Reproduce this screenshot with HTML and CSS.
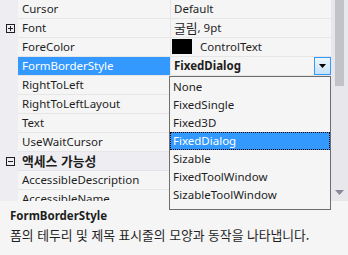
FILE: index.html
```html
<!DOCTYPE html>
<html lang="ko">
<head>
    <meta charset="UTF-8">
    <title>속성</title>
    <link rel="stylesheet" href="styles.css">
</head>
<body>
<div class="panel">
    <div class="grid">
        <div class="rows">
            <div class="row">
                <div class="gutter"></div>
                <div class="name">Cursor</div>
                <div class="value">Default</div>
            </div>
            <div class="row">
                <div class="gutter">
                    <svg class="toggle" width="9" height="9" viewBox="0 0 9 9"><rect x="0.5" y="0.5" width="8" height="8" fill="none" stroke="#1e1e1e"/><path d="M2 4.5h5M4.5 2v5" stroke="#1e1e1e"/></svg>
                </div>
                <div class="name">Font</div>
                <div class="value"><span class="ko">굴림</span>, 9pt</div>
            </div>
            <div class="row">
                <div class="gutter"></div>
                <div class="name">ForeColor</div>
                <div class="value"><span class="swatch"></span>ControlText</div>
            </div>
            <div class="row selected">
                <div class="gutter"></div>
                <div class="name">FormBorderStyle</div>
                <div class="value">
                    <b>FixedDialog</b>
                    <span class="drop-btn"><svg width="7" height="4" viewBox="0 0 7 4"><path d="M0 0h7L3.5 4z" fill="#000"/></svg></span>
                </div>
            </div>
            <div class="row">
                <div class="gutter"></div>
                <div class="name">RightToLeft</div>
                <div class="value"></div>
            </div>
            <div class="row">
                <div class="gutter"></div>
                <div class="name">RightToLeftLayout</div>
                <div class="value"></div>
            </div>
            <div class="row">
                <div class="gutter"></div>
                <div class="name">Text</div>
                <div class="value"></div>
            </div>
            <div class="row">
                <div class="gutter"></div>
                <div class="name">UseWaitCursor</div>
                <div class="value"></div>
            </div>
            <div class="row category">
                <div class="gutter">
                    <svg class="toggle" width="9" height="9" viewBox="0 0 9 9"><rect x="0.5" y="0.5" width="8" height="8" fill="none" stroke="#1e1e1e"/><path d="M2 4.5h5" stroke="#1e1e1e"/></svg>
                </div>
                <div class="name ko">액세스 가능성</div>
            </div>
            <div class="row">
                <div class="gutter"></div>
                <div class="name">AccessibleDescription</div>
                <div class="value"></div>
            </div>
            <div class="row">
                <div class="gutter"></div>
                <div class="name">AccessibleName</div>
                <div class="value"></div>
            </div>
        </div>
        <div class="scrollbar">
            <div class="thumb"></div>
            <svg class="arrow-down" width="9" height="5" viewBox="0 0 9 5"><path d="M0 0h9L4.5 5z" fill="#868999"/></svg>
        </div>
    </div>

    <div class="help">
        <div class="help-title">FormBorderStyle</div>
        <div class="help-text ko">폼의 테두리 및 제목 표시줄의 모양과 동작을 나타냅니다.</div>
    </div>

    <ul class="dropdown">
        <li>None</li>
        <li>FixedSingle</li>
        <li>Fixed3D</li>
        <li class="current">FixedDialog</li>
        <li>Sizable</li>
        <li>FixedToolWindow</li>
        <li>SizableToolWindow</li>
    </ul>
</div>
</body>
</html>
```

FILE: styles.css
```css
body {
    margin: 0;
    font-family: "Noto Sans", "Noto Sans CJK KR", sans-serif;
    font-size: 11.5px;
    color: #1e1e1e;
    background-color: #f5f5f5;
}
.ko {
    font-family: "Noto Sans CJK KR", "Noto Sans", sans-serif;
    font-size: 12.8px;
}
.panel {
    position: relative;
    width: 348px;
    height: 255px;
    overflow: hidden;
    display: flex;
    flex-direction: column;
}
.grid {
    display: flex;
    height: 201px;
    flex: none;
}
.rows {
    width: 331px;
    overflow: hidden;
}
.row {
    display: flex;
    height: 19px;
    line-height: 18px;
}
.gutter {
    width: 18px;
    flex: none;
    background-color: #eeeef2;
    display: flex;
    align-items: center;
    padding-left: 6px;
    box-sizing: border-box;
}
.toggle {
    display: block;
}
.name {
    width: 153px;
    flex: none;
    box-sizing: border-box;
    height: 19px;
    padding-left: 4px;
    border-right: 1px solid #e6e6e8;
    border-bottom: 1px solid #e6e6e8;
    white-space: nowrap;
    overflow: hidden;
}
.value {
    flex: 1;
    height: 19px;
    box-sizing: border-box;
    padding-left: 3px;
    border-bottom: 1px solid #e6e6e8;
    display: flex;
    align-items: flex-start;
    white-space: nowrap;
}
.selected .name {
    background-color: #3399ff;
    color: #fff;
}
.drop-btn {
    margin-left: auto;
    width: 17px;
    height: 18px;
    box-sizing: border-box;
    border: 1px solid #3399ff;
    background: linear-gradient(#eef6fd, #c6e3f9);
    display: flex;
    align-items: center;
    justify-content: center;
}
.swatch {
    display: inline-block;
    width: 20px;
    height: 15px;
    margin: 1px 8px 0 -2px;
    background-color: #000;
}
.category {
    background-color: #eeeef2;
}
.category .name {
    flex: 1;
    font-weight: bold;
    border-right: none;
    border-bottom-color: #e4e4e8;
}
.scrollbar {
    width: 17px;
    flex: none;
    background-color: #e8e8ec;
    display: flex;
    flex-direction: column;
    align-items: flex-start;
}
.thumb {
    width: 9px;
    height: 86px;
    margin-left: 4px;
    background-color: #c2c3c9;
}
.arrow-down {
    margin: auto 0 6px 4px;
    display: block;
}
.help {
    flex: 1;
    padding: 6px 10px;
    line-height: 17px;
}
.help-title {
    font-weight: bold;
}
.help-text {
    margin-top: 2px;
}
.dropdown {
    position: absolute;
    left: 169px;
    top: 76px;
    width: 162px;
    height: 134px;
    box-sizing: border-box;
    margin: 0;
    padding: 1px 0 0;
    list-style: none;
    border: 1px solid #6e6e6e;
    background-color: #f5f5f5;
}
.dropdown li {
    height: 18px;
    line-height: 18px;
    padding-left: 3px;
}
.dropdown li.current {
    background-color: #3399ff;
    color: #fff;
    outline: 1px dotted #000;
    outline-offset: -1px;
}
```
